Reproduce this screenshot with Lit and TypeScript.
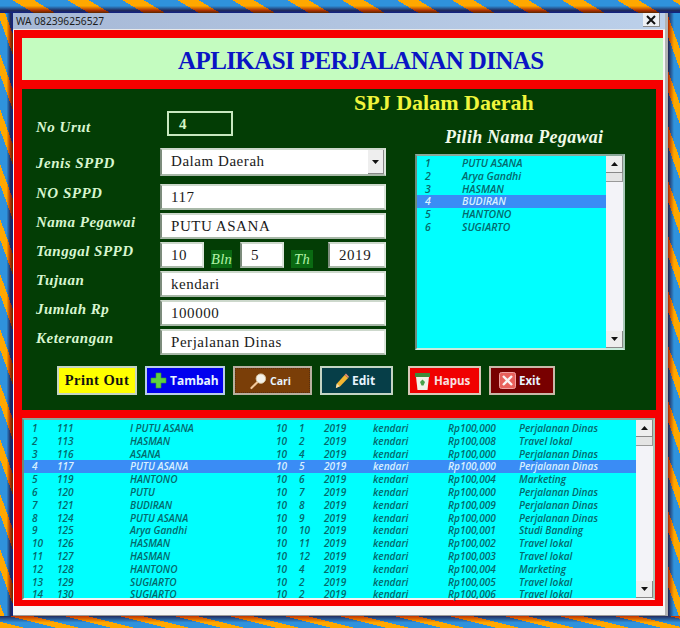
import { LitElement, html, css, svg } from "lit";
import { customElement } from "lit/decorators.js";

const rows: string[][] = [
  ["1","111","I PUTU ASANA","10","1","2019","kendari","Rp100,000","Perjalanan Dinas"],
  ["2","113","HASMAN","10","2","2019","kendari","Rp100,008","Travel lokal"],
  ["3","116","ASANA","10","4","2019","kendari","Rp100,000","Perjalanan Dinas"],
  ["4","117","PUTU ASANA","10","5","2019","kendari","Rp100,000","Perjalanan Dinas"],
  ["5","119","HANTONO","10","6","2019","kendari","Rp100,004","Marketing"],
  ["6","120","PUTU","10","7","2019","kendari","Rp100,000","Perjalanan Dinas"],
  ["7","121","BUDIRAN","10","8","2019","kendari","Rp100,009","Perjalanan Dinas"],
  ["8","124","PUTU ASANA","10","9","2019","kendari","Rp100,000","Perjalanan Dinas"],
  ["9","125","Arya Gandhi","10","10","2019","kendari","Rp100,001","Studi Banding"],
  ["10","126","HASMAN","10","11","2019","kendari","Rp100,002","Travel lokal"],
  ["11","127","HASMAN","10","12","2019","kendari","Rp100,003","Travel lokal"],
  ["12","128","HANTONO","10","4","2019","kendari","Rp100,004","Marketing"],
  ["13","129","SUGIARTO","10","2","2019","kendari","Rp100,005","Travel lokal"],
  ["14","130","SUGIARTO","10","2","2019","kendari","Rp100,006","Travel lokal"],
];
const names = [["1","PUTU ASANA"],["2","Arya Gandhi"],["3","HASMAN"],["4","BUDIRAN"],["5","HANTONO"],["6","SUGIARTO"]];

const scrollbar = html`<div class="sb">
  <div class="sbtn"><svg width="7" height="4" viewBox="0 0 7 4"><path d="M3.5 0L7 4H0z" fill="#111"/></svg></div>
  <div class="thumb"></div><div class="track"></div>
  <div class="sbtn"><svg width="7" height="4" viewBox="0 0 7 4"><path d="M0 0h7L3.5 4z" fill="#111"/></svg></div>
</div>`;

const icPlus = svg`<svg class="ic" width="17" height="17" viewBox="0 0 17 17"><path d="M6 1h5v5h5v5h-5v5H6v-5H1V6h5z" fill="#5fd040" stroke="#3a9a30" stroke-width=".6"/></svg>`;
const icFind = svg`<svg class="ic" width="17" height="18" viewBox="0 0 18 18"><path d="M1.5 16.500L8 10" stroke="#f2c79a" stroke-width="2.2" stroke-linecap="round"/><circle cx="11.500" cy="6.500" r="5" fill="#f4f2ea" stroke="#d8c8a8"/></svg>`;
const icEdit = svg`<svg class="ic" width="14" height="16" viewBox="0 0 16 18"><path d="M1 17l1-5L11 2l4 3.500L6 15z" fill="#f2b632"/><path d="M11 2l1.500-1.500L16 4l-1 1.500z" fill="#e88a70"/><path d="M1 17l1-5 3.500 3z" fill="#f6e2b8"/></svg>`;
const icTrash = svg`<svg class="ic" width="15" height="18" viewBox="0 0 15 18"><path d="M0 1h15v4H0z" fill="#3e8a3a"/><path d="M1 5h13l-1.500 13h-10z" fill="#f2f2e8"/><path d="M5 10l2.500-2.500 2.500 2.500-1.500 3.500h-2z" fill="#4aa04a"/></svg>`;
const icExit = svg`<svg class="ic" width="17" height="17" viewBox="0 0 17 17"><rect x=".5" y=".5" width="16" height="16" rx="2" fill="#e8615c" stroke="#f0a0a0"/><path d="M4 4l9 9M13 4l-9 9" stroke="#f8f4f4" stroke-width="2.4"/></svg>`;

@customElement("app-root")
export class AppRoot extends LitElement {
  static styles = css`
    :host { display: block; width: 680px; height: 628px; overflow: hidden; font-family: "Liberation Serif", serif; background: #1a50b0; }
    * { box-sizing: border-box; }
    .strip { background-blend-mode: multiply; background-repeat: no-repeat; }
    .top { height: 13px; background-image: linear-gradient(to bottom, #fff 45%, #b04a6a 80%, #5a3a9a 100%),
      repeating-linear-gradient(31deg, #ffa800 0 11px, #2f92dc 11px 28.3px);
      background-size: 100% 100%, 760px 100%; background-position: 0 0, -21px 0; }
    .bottom { height: 12px; background-image: linear-gradient(to top, #fff 45%, #c04a6a 100%),
      repeating-linear-gradient(14deg, #ffa800 0 5.6px, #2f92dc 5.6px 13.3px);
      background-size: 100% 100%, 760px 100%; background-position: 0 0, -53px 0; }
    .mid { display: flex; height: 603px; }
    .left { width: 13px; background-image: linear-gradient(to left, #5a3a9a 0, #b04a6a 20%, #fff 50%),
      repeating-linear-gradient(70deg, #ffa800 0 7px, #2f92dc 7px 18.8px);
      background-size: 100% 100%, 100% 800px; background-position: 0 0, 0 -24px; }
    .right { width: 12px; background-image: linear-gradient(to right, #b03a5a 0, #fff 50%),
      repeating-linear-gradient(70deg, #ffa800 0 7px, #2f92dc 7px 18.8px);
      background-size: 100% 100%, 100% 800px; background-position: 0 0, 0 -7px; }
    .win { width: 655px; background: #f6f6f6; display: flex; flex-direction: column; border-right: 3px solid #b4b4b4; border-bottom: 1px solid #9a9a9a; padding-left: 1px; }
    .titlebar { height: 17px; margin-left: -1px; background: linear-gradient(to right, #a6b8d6, #bcd0ea); display: flex; align-items: center; justify-content: space-between; padding: 0 5px 0 3px; font: 10.2px "Noto Sans", sans-serif; color: #1c1c1c; border-bottom: 1px solid #e8e8e8; }
    .close { width: 17px; height: 14px; margin-top: -2px; background: #eef0f4; border-right: 1px solid #8a8a8a; border-bottom: 1px solid #8a8a8a; display: flex; align-items: center; justify-content: center; }
    .redframe { background: #f60000; padding: 8px 0 6px 8px; width: 649px; }
    .mint { height: 42px; background: #c4fcc0; margin-bottom: 9px; padding-left: 156px; font: bold 25px/46px "Liberation Serif", serif; letter-spacing: -.6px; color: #0a14c4; white-space: nowrap; }
    .panel { width: 634px; height: 321px; background: #033d05; margin-bottom: 8px; display: flex; flex-direction: column; }
    .spj { margin-left: 332px; height: 22px; font: bold 22px/28px "Liberation Serif", serif; color: #f0f53c; white-space: nowrap; }
    .upper { display: flex; }
    .form { margin-left: 14px; width: 350px; display: grid; grid-template-columns: 124px 226px; row-gap: 3px; align-items: start; }
    .lbl { font: italic bold 15px/18px "Liberation Serif", serif; letter-spacing: .5px; color: #d8f6d0; }
    .lbl.urut-l { padding-top: 7px; }
    .lbl.combo-l { margin-top: 15px; }
    .box { height: 26px; background: #fff; border: 2px solid; border-color: #cdd8cc #dce6dc #a8b8a8 #7c8c7c; font: 15px/23px "Liberation Serif", serif; letter-spacing: .55px; color: #1a1a1a; padding-left: 9px; }
    .urut { margin-left: 7px; width: 66px; height: 25px; background: transparent; border-color: #c8e8c0; color: #d8f6c8; padding-left: 10px; font-weight: bold; }
    .combo { height: 28px; display: flex; justify-content: space-between; padding-right: 0; line-height: 22px; }
    .arrow { width: 16px; height: 24px; background: #eeeeee; border-right: 1px solid #888; border-bottom: 1px solid #888; display: flex; align-items: center; justify-content: center; }
    .row-2 { margin-top: 9px; }
    .row-3 { margin-top: 5px; }
    .date { display: flex; align-items: flex-start; }
    .d1, .d2 { width: 44px; }
    .d3 { width: 58px; margin-left: 15px; }
    .tag { margin: 8px 0 0 7px; width: 22px; height: 18px; background: #0a6a12; color: #b4f4a8; font: italic 14.5px/19px "Liberation Serif", serif; text-align: center; letter-spacing: .3px; }
    .tag.bln { margin-right: 8px; width: 21px; }
    .side { margin-left: 29px; width: 210px; display: flex; flex-direction: column; }
    .pilih { height: 43px; padding: 17px 0 0 30px; font: italic bold 18px/18px "Liberation Serif", serif; letter-spacing: .3px; color: #f0fae8; white-space: nowrap; }
    .list { background: #00ffff; border: 2px solid; border-color: #8aa89a #a8c8b8 #c8ecdc #6a8a7a; display: flex; }
    .plist { height: 196px; }
    .rows { flex: 1; min-width: 0; padding-top: 1px; }
    .prow { display: grid; grid-template-columns: 37px 1fr; padding-left: 8px; height: 12.8px; font: italic 600 10.5px/13px "Open Sans", sans-serif; color: #04696c; }
    .trow { display: grid; grid-template-columns: 25px 73px 146px 23px 25px 49px 75px 71px 1fr; padding-left: 8px; height: 12.8px; font: italic 600 10.1px/13px "Open Sans", sans-serif; color: #04696c; white-space: nowrap; }
    .prow.sel, .trow.sel { background: #3a8cf5; color: #d8f0ff; }
    .sb { width: 17px; display: flex; flex-direction: column; background: #f3f3f8; }
    .sbtn { height: 17px; background: #eeeeee; border-right: 1px solid #888; border-bottom: 1px solid #888; display: flex; align-items: center; justify-content: center; flex: none; }
    .thumb { height: 9px; background: #e4e4e4; border-right: 1px solid #999; border-bottom: 1px solid #999; flex: none; }
    .track { flex: 1; }
    .buttons { display: flex; margin: 11px 0 0 35px; }
    .btn { height: 29px; display: flex; align-items: center; gap: 3px; border: 2px solid #c4d4c4; font: bold 12px "Open Sans", sans-serif; color: #e8f4ff; margin-right: 8px; flex: none; }
    .btn .ic { flex: none; }
    .print { width: 80px; justify-content: center; background: #ffff00; color: #111; font: bold 14.5px "Liberation Serif", serif; letter-spacing: .5px; }
    .tambah { width: 80px; padding-left: 3px; background: #0000ee; border-color: #b8cce8; }
    .cari { width: 79px; padding-left: 15px; background: #7a3e08; border-color: #b8b0a0; outline: 1px dotted #5a3010; outline-offset: -3px; font-size: 10.5px; }
    .edit { width: 73px; padding-left: 13px; background: #063e48; margin-right: 15px; }
    .hapus { width: 73px; padding-left: 5px; gap: 4px; background: #f00000; border-color: #d8c8b8; color: #f8e0e0; font-size: 11.5px; }
    .exit { width: 66px; padding-left: 8px; background: #780000; border-color: #c8b8a8; font-size: 11.5px; }
    .table { width: 633px; height: 182px; border-bottom-color: #f4f4f4; }
    .table .rows { padding-top: 2px; }
    .foot { flex: 1; }
  `;

  render() {
    return html`
      <div class="strip top"></div>
      <div class="mid">
        <div class="strip left"></div>
        <div class="win">
          <div class="titlebar"><span>WA 082396256527</span>
            <div class="close"><svg width="10" height="10" viewBox="0 0 10 10"><path d="M1 1l8 8M9 1l-8 8" stroke="#111" stroke-width="2"/></svg></div>
          </div>
          <div class="redframe">
            <div class="mint">APLIKASI PERJALANAN DINAS</div>
            <div class="panel">
              <div class="spj">SPJ Dalam Daerah</div>
              <div class="upper">
                <div class="form">
                  <div class="lbl urut-l">No Urut</div><div class="box urut">4</div>
                  <div class="lbl combo-l row-2">Jenis SPPD</div>
                  <div class="box combo row-2"><span>Dalam Daerah</span><div class="arrow"><svg width="7" height="4" viewBox="0 0 7 4"><path d="M0 0h7L3.500 4z" fill="#111"/></svg></div></div>
                  <div class="lbl row-3">NO SPPD</div><div class="box row-3">117</div>
                  <div class="lbl">Nama Pegawai</div><div class="box">PUTU ASANA</div>
                  <div class="lbl">Tanggal SPPD</div>
                  <div class="date"><div class="box d1">10</div><div class="tag bln">Bln</div><div class="box d2">5</div><div class="tag">Th</div><div class="box d3">2019</div></div>
                  <div class="lbl">Tujuan</div><div class="box">kendari</div>
                  <div class="lbl">Jumlah Rp</div><div class="box">100000</div>
                  <div class="lbl">Keterangan</div><div class="box">Perjalanan Dinas</div>
                </div>
                <div class="side">
                  <div class="pilih">Pilih Nama Pegawai</div>
                  <div class="list plist">
                    <div class="rows">${names.map((n, i) => html`<div class="prow ${i === 3 ? "sel" : ""}"><span>${n[0]}</span><span>${n[1]}</span></div>`)}</div>
                    ${scrollbar}
                  </div>
                </div>
              </div>
              <div class="buttons">
                <div class="btn print">Print Out</div>
                <div class="btn tambah">${icPlus}Tambah</div>
                <div class="btn cari">${icFind}Cari</div>
                <div class="btn edit">${icEdit}Edit</div>
                <div class="btn hapus">${icTrash}Hapus</div>
                <div class="btn exit">${icExit}Exit</div>
              </div>
            </div>
            <div class="list table">
              <div class="rows">${rows.map((r, i) => html`<div class="trow ${i === 3 ? "sel" : ""}">${r.map((c) => html`<span>${c}</span>`)}</div>`)}</div>
              ${scrollbar}
            </div>
          </div>
          <div class="foot"></div>
        </div>
        <div class="strip right"></div>
      </div>
      <div class="strip bottom"></div>
    `;
  }
}
